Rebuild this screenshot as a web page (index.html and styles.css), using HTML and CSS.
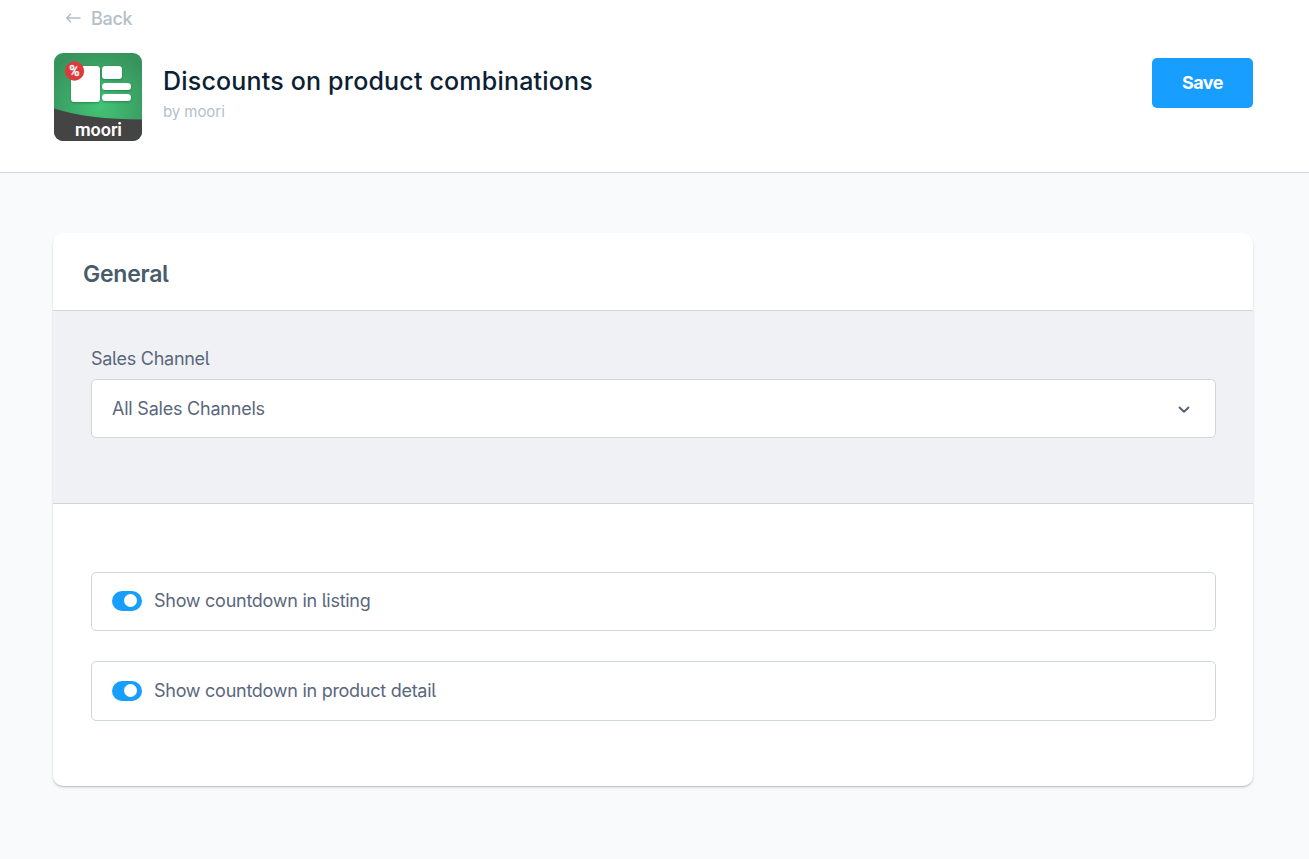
FILE: index.html
```html
<!DOCTYPE html>
<html lang="en">
<head>
<meta charset="utf-8">
<title>Discounts on product combinations</title>
<link rel="stylesheet" href="styles.css">
</head>
<body>
<header class="page-header">
  <a class="back">
    <svg class="back-icon" width="16" height="12" viewBox="0 0 16 12" fill="none" stroke="currentColor" stroke-width="1.6" stroke-linecap="round" stroke-linejoin="round"><path d="M15 6H2M5.500 2.200 1.800 6l3.700 3.800"/></svg>
    <span class="back-label">Back</span>
  </a>
  <div class="head-row">
    <svg class="logo" width="88" height="88" viewBox="0 0 88 88">
      <defs>
        <radialGradient id="green" cx=".52" cy=".6" r=".65"><stop offset="0" stop-color="#43c477"/><stop offset="1" stop-color="#37935c"/></radialGradient>
        <clipPath id="tile"><rect width="88" height="88" rx="9"/></clipPath>
        <filter id="shade" x="-20%" y="-20%" width="140%" height="150%"><feDropShadow dx="0" dy="1" stdDeviation="1.2" flood-color="#0b3d20" flood-opacity=".4"/></filter>
      </defs>
      <g clip-path="url(#tile)">
        <rect width="88" height="88" fill="url(#green)"/>
        <path d="M0 55.500Q34 66.500 88 66.500V88H0Z" fill="#444"/>
      </g>
      <g fill="#fff" filter="url(#shade)">
        <rect x="17" y="13" width="29" height="36" rx="3.500"/>
        <rect x="48" y="13" width="20" height="13" rx="3.500"/>
        <rect x="48" y="30" width="29" height="7" rx="3.500"/>
        <rect x="48" y="41" width="29" height="7" rx="3.500"/>
      </g>
      <circle cx="20.500" cy="18" r="9.700" fill="#dc3b3d"/>
      <text class="logo-percent" x="20.500" y="22.700" text-anchor="middle">%</text>
      <text class="logo-name" x="44.500" y="83" text-anchor="middle" textLength="47">moori</text>
    </svg>
    <div class="titles">
      <h1 class="title">Discounts on product combinations</h1>
      <div class="author">by moori</div>
    </div>
    <button class="save">Save</button>
  </div>
</header>
<main class="content">
  <section class="card">
    <h2 class="card-title">General</h2>
    <div class="channel">
      <div class="label">Sales Channel</div>
      <div class="select">
        <span class="select-value">All Sales Channels</span>
        <svg class="chevron" width="14" height="10" viewBox="0 0 14 10" fill="none" stroke="#53657a" stroke-width="2" stroke-linecap="round" stroke-linejoin="round"><path d="m2.500 3.600 4.500 4.200 4.500-4.200"/></svg>
      </div>
    </div>
    <div class="settings">
      <div class="setting"><span class="switch"><span class="knob"></span></span><span class="setting-label">Show countdown in listing</span></div>
      <div class="setting tall"><span class="switch"><span class="knob"></span></span><span class="setting-label">Show countdown in product detail</span></div>
    </div>
  </section>
</main>
</body>
</html>
```
FILE: styles.css
```css
* { box-sizing: border-box; }
body { margin: 0; min-height: 859px; background: #f9fafc; font-family: Inter, "Liberation Sans", sans-serif; color: #5a677d; }
.page-header { height: 173px; padding: 6px 56px 0 54px; background: #fff; border-bottom: 1px solid #d1d6dd; }
.back { display: flex; align-items: center; gap: 10px; height: 24px; padding-left: 11px; color: #b3bfca; font-size: 18px; letter-spacing: -.3px; font-weight: 500; }
.head-row { display: flex; align-items: flex-start; margin-top: 23px; }
.logo { display: block; }
.logo-percent { fill: #fff; stroke: #fff; stroke-width: .3px; font: 500 14px Roboto, sans-serif; }
.logo-name { fill: #fff; font: 600 18px Roboto, sans-serif; }
.titles { flex: 1; padding: 12px 0 0 21px; }
.title { margin: 0; color: #0b2133; font-size: 25px; letter-spacing: .19px; line-height: 32px; font-weight: 500; }
.author { margin-top: 5px; color: #b3bfca; font-size: 15px; letter-spacing: -.06px; line-height: 20px; }
.save { width: 101px; height: 50px; margin-top: 5px; padding: 0 0 2px; border: 0; border-radius: 5px; background: #189eff; color: #fff; font: 700 18px Inter, sans-serif; letter-spacing: -.5px; }
.content { padding: 60px 56px 72px 53px; }
.card { height: 553px; overflow: hidden; background: #fff; border-radius: 10px; box-shadow: 0 1px 1px rgba(0,0,0,.14), 0 2px 3px rgba(0,0,0,.1); }
.card-title { height: 78px; margin: 0; padding: 23px 30px 0; border-bottom: 1px solid #d1d6dd; color: #485b6b; font-size: 23px; letter-spacing: -.25px; line-height: 36px; font-weight: 600; font-feature-settings: "cv05"; }
.channel { height: 193px; padding: 36px 37px 0 38px; background: #f0f1f5; border-bottom: 1px solid #d1d6dd; }
.label, .select, .setting { font-size: 18px; letter-spacing: -.27px; font-feature-settings: "cv05"; }
.label { height: 32px; line-height: 24px; }
.select { display: flex; align-items: center; justify-content: space-between; height: 59px; padding: 0 24px 0 20px; border: 1px solid #d1d6dd; border-radius: 5px; background: #fff; }
.select-value { font-feature-settings: normal; letter-spacing: -.22px; }
.settings { display: grid; gap: 30px; padding: 68px 37px 0 38px; }
.setting { display: flex; align-items: center; gap: 12px; height: 59px; padding: 0 20px 2px; border: 1px solid #d1d6dd; border-radius: 5px; }
.tall { height: 60px; padding-bottom: 1px; }
.tall .setting-label { padding-bottom: 1px; }
.switch { display: flex; justify-content: flex-end; width: 30px; height: 20px; padding: 3.500px 5px; border-radius: 10px; background: #189eff; }
.knob { width: 13px; height: 13px; border-radius: 50%; background: #fff; }
```
